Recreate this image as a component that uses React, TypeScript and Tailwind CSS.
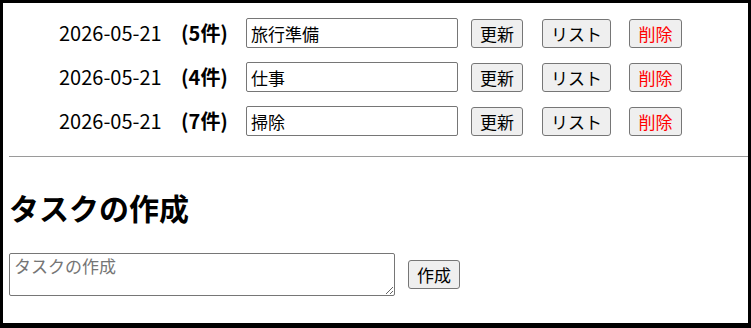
import React from "react";

const rows = [
  { date: "2026-05-21", count: 5, name: "旅行準備" },
  { date: "2026-05-21", count: 4, name: "仕事" },
  { date: "2026-05-21", count: 7, name: "掃除" },
];

const btn =
  "h-[29px] bg-[#efefef] border border-[#767676] rounded-[3px] text-[17px] leading-none flex items-center justify-center";

export default function App() {
  return (
    <div
      className="w-[751px] h-[328px] bg-white border-black border-t-[3px] border-l-[3px] border-r-[3px] border-b-[5px] text-black overflow-hidden"
      style={{ fontFamily: '"Noto Sans CJK JP", "Noto Sans", sans-serif' }}
    >
      <div className="pt-[8px] flex flex-col">
        {rows.map((r, i) => (
          <div key={i} className="h-[44px] flex items-center pl-[56px]">
            <span className="w-[122px] text-[20px] leading-none">{r.date}</span>
            <span className="w-[65px] text-[20px] font-bold leading-none">({r.count}件)</span>
            <input
              defaultValue={r.name}
              className="w-[212px] h-[30px] border border-[#767676] rounded-[2px] px-[4px] text-[17px] outline-none"
            />
            <button className={`${btn} ml-[13px] w-[52px] text-black`}>更新</button>
            <button className={`${btn} ml-[19px] w-[69px] text-black`}>リスト</button>
            <button className={`${btn} ml-[18px] w-[53px] text-[#ff0000]`}>削除</button>
          </div>
        ))}
      </div>
      <div className="pl-[6px] mt-[13px]">
        <div className="border-t border-[#9a9a9a]" />
        <h2 className="mt-[32px] text-[30px] font-bold leading-[36px]">タスクの作成</h2>
        <div className="mt-[28px] flex items-center">
          <textarea
            placeholder="タスクの作成"
            className="w-[386px] h-[43px] border border-[#767676] rounded-[2px] px-[4px] py-[1px] text-[17px] leading-[22px] placeholder:text-[#757575] outline-none resize"
          />
          <button className={`${btn} ml-[13px] w-[52px] text-black`}>作成</button>
        </div>
      </div>
    </div>
  );
}
